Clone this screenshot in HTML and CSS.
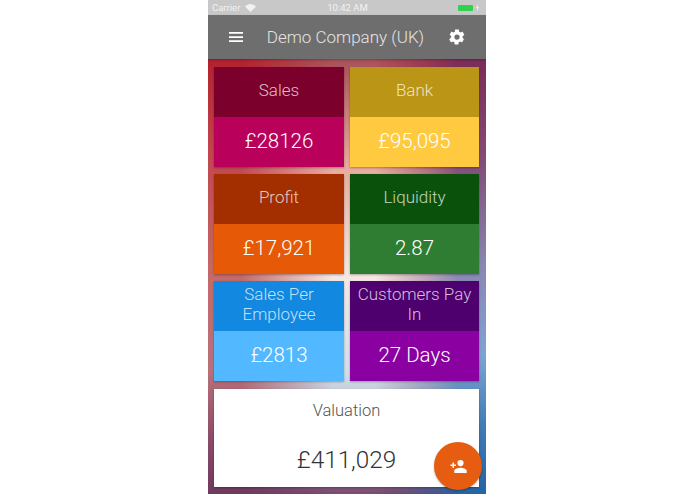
FILE: index.html
```html
<!DOCTYPE html>
<html lang="en">
  <head>
    <meta charset="UTF-8" />
    <title>Demo Company (UK)</title>
    <link rel="stylesheet" href="styles.css">
  </head>
  <body>
    <div class="phone">
      <div class="backdrop"></div>
      <div class="status">
        <span class="carrier">Carrier</span>
        <svg class="wifi" width="11" height="8" viewBox="0 0 11 8">
          <path d="M5.5 8 0 2.6C3.2-.8 7.8-.8 11 2.6z" fill="#f2f2f2" />
        </svg>
        <span class="time">10:42 AM</span>
        <span class="battery"></span>
        <svg class="bolt" width="3" height="7" viewBox="0 0 3 7">
          <path d="M2 0 0 4h1.2L1 7l2-4H1.800z" fill="#f2f2f2" />
        </svg>
      </div>
      <!-- title bar -->
      <header class="bar">
        <svg class="menu" width="14" height="10" viewBox="0 0 14 10">
          <path d="M0 0h14v1.700H0zM0 4.200h14v1.700H0zM0 8.300h14V10H0z" fill="#fff" />
        </svg>
        <h1>Demo Company (UK)</h1>
        <svg class="gear" width="18" height="18" viewBox="0 0 24 24">
          <path d="M19.400 13c.04-.33.1-.66.1-1s-.06-.67-.1-1l2.100-1.650c.2-.15.25-.42.12-.64l-2-3.460c-.12-.22-.39-.3-.61-.22l-2.490 1c-.52-.4-1.060-.73-1.690-.98l-.37-2.650A.506.506 0 0 0 14 2h-4c-.25 0-.46.18-.5.42l-.37 2.650c-.63.25-1.170.59-1.690.98l-2.490-1c-.22-.08-.49 0-.61.22l-2 3.460c-.13.22-.07.49.12.640L4.570 11c-.04.33-.7.670-.7 1s.03.670.07 1l-2.110 1.650c-.19.150-.25.420-.12.640l2 3.460c.12.220.39.300.61.220l2.490-1c.52.400 1.060.730 1.690.980l.37 2.650c.04.240.25.420.5.420h4c.25 0 .46-.18.5-.42l.37-2.650c.63-.25 1.170-.58 1.690-.98l2.490 1c.22.080.49 0 .61-.22l2-3.460c.13-.22.07-.49-.12-.64zM12 15.500a3.500 3.500 0 1 1 0-7 3.500 3.500 0 0 1 0 7z" fill="#fff" />
        </svg>
      </header>
      <main class="tiles">
        <div class="tile sales">
          <div class="name">Sales</div>
          <div class="num">£28126</div>
        </div>
        <div class="tile bank">
          <div class="name">Bank</div>
          <div class="num">£95,095</div>
        </div>
        <div class="tile profit">
          <div class="name">Profit</div>
          <div class="num">£17,921</div>
        </div>
        <div class="tile liquidity">
          <div class="name">Liquidity</div>
          <div class="num">2.87</div>
        </div>
        <div class="tile employee">
          <div class="name">Sales Per Employee</div>
          <div class="num">£2813</div>
        </div>
        <div class="tile customers">
          <div class="name">Customers Pay In</div>
          <div class="num">27 Days</div>
        </div>
        <div class="tile valuation">
          <div class="name">Valuation</div>
          <div class="num">£411,029</div>
        </div>
      </main>
      <button class="fab">
        <svg width="18" height="13" viewBox="0 0 18 13">
          <path d="M11.500 6.200a3.100 3.100 0 1 0 0-6.200 3.100 3.100 0 0 0 0 6.200zM5 4.500V2.500H3.500v2h-2V6h2v2H5V6h2V4.500zM11.500 7.800C9.400 7.800 5.300 8.800 5.300 10.900V13h12.400v-2.100c0-2.100-4.100-3.100-6.200-3.100z" fill="#fff" />
        </svg>
      </button>
    </div>
  </body>
</html>
```

FILE: styles.css
```css
* {
  box-sizing: border-box;
  margin: 0;
  padding: 0;
}
html,
body {
  height: 100%;
  background: #fff;
  overflow: hidden;
}
.phone {
  position: relative;
  width: 278px;
  height: 494px;
  margin-left: 208px;
  overflow: hidden;
  font-family: "Roboto", "Liberation Sans", sans-serif;
  font-weight: 300;
}
/* wallpaper: left edge, with the right edge and the pale middle faded over it */
.backdrop,
.backdrop::before,
.backdrop::after {
  position: absolute;
  top: 59px;
  left: 0;
  width: 100%;
  height: 435px;
}
.backdrop {
  background: linear-gradient(180deg, #b3202f 0%, #c0444c 20%, #c56a68 50%, #b8707a 72%, #8a4a68 88%, #6e3a5e 100%);
}
.backdrop::before {
  content: "";
  top: 0;
  background: linear-gradient(180deg, #7a2c58 0%, #82507c 25%, #8a88b4 48%, #7ea4d0 68%, #3f7ab4 85%, #2565a5 100%);
  -webkit-mask-image: linear-gradient(90deg, transparent 45%, #000 92%);
  mask-image: linear-gradient(90deg, transparent 45%, #000 92%);
}
.backdrop::after {
  content: "";
  top: 0;
  background: linear-gradient(180deg, #a85058 0%, #e8a89c 24%, #f6e8e4 50%, #cfe0ea 72%, #a88ca8 92%, #7a4a70 100%);
  -webkit-mask-image: linear-gradient(90deg, transparent 12%, #000 45%, #000 60%, transparent 90%);
  mask-image: linear-gradient(90deg, transparent 12%, #000 45%, #000 60%, transparent 90%);
}
.status {
  position: relative;
  display: flex;
  align-items: center;
  height: 15px;
  padding: 0 7px 0 4px;
  background: #c8c8c8;
  color: #f2f2f2;
  font-size: 9.5px;
  font-weight: 400;
}
.carrier {
  margin-right: 5px;
}
.time {
  position: absolute;
  left: 1px;
  right: 0;
  text-align: center;
}
.battery {
  width: 15px;
  height: 6px;
  margin-left: auto;
  margin-right: 3px;
  border-radius: 1px;
  background: #2fd14f;
}
.bar {
  position: relative;
  display: flex;
  align-items: center;
  height: 44px;
  padding: 0 20px 0 21px;
  background: #6e6e6e;
  box-shadow: 0 1px 2px rgba(0, 0, 0, 0.25);
}
.bar h1 {
  flex: 1;
  color: #e4e4e4;
  font-size: 17px;
  font-weight: 300;
  text-align: center;
}
.tiles {
  position: relative;
  display: grid;
  grid-template-columns: 130px 129px;
  gap: 7px 6px;
  padding: 8px 0 0 6px;
}
.tile {
  height: 100px;
  box-shadow: 0 1px 2px rgba(0, 0, 0, 0.3);
  color: #fff;
  text-align: center;
}
.name {
  display: flex;
  align-items: center;
  justify-content: center;
  height: 50px;
  padding-bottom: 4px;
  font-size: 17px;
  line-height: 20px;
  color: rgba(255, 255, 255, 0.75);
}
.num {
  display: flex;
  align-items: center;
  justify-content: center;
  height: 50px;
  padding-bottom: 2px;
  font-size: 20.5px;
}
.sales .name { background: #7b002c; }
.sales .num { background: #b9005a; }
.bank .name { background: #bb9515; }
.bank .num { background: #ffca3f; }
.profit .name { background: #a32e00; }
.profit .num { background: #e65a07; }
.liquidity .name { background: #0a520c; }
.liquidity .num { background: #2e7d32; }
.employee .name { background: #1288e0; }
.employee .num { background: #52b8ff; }
.customers .name { background: #4e006f; }
.customers .num { background: #8a00a0; }
.valuation {
  grid-column: 1 / 3;
  height: 98px;
  margin-top: 1px;
  background: #fff;
  color: #333;
}
.valuation .name {
  height: 44px;
  padding-bottom: 0;
  font-size: 16.5px;
  color: #555;
}
.valuation .num {
  height: 54px;
  padding-bottom: 2px;
  font-size: 24.3px;
}
.fab {
  position: absolute;
  left: 226px;
  top: 442px;
  display: flex;
  align-items: center;
  justify-content: center;
  width: 48px;
  height: 48px;
  border: 0;
  border-radius: 50%;
  background: #e65c10;
  box-shadow: 0 1px 2px rgba(0, 0, 0, 0.3);
}
```
